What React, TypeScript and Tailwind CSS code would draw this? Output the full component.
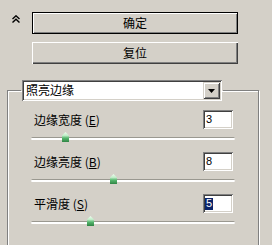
import React from "react";

const sunken =
  "shadow-[inset_1px_1px_0_#808080,inset_-1px_-1px_0_#ffffff,inset_2px_2px_0_#404040,inset_-2px_-2px_0_#d4d0c8]";

function TextBox({ value, selected }: { value: string; selected?: boolean }) {
  return (
    <div
      className={`w-[30px] h-[19px] bg-white ${sunken} flex items-center pl-[2px] text-[11px] leading-none font-['Liberation_Sans',sans-serif]`}
    >
      {selected ? (
        <span className="bg-[#0a246a] text-white px-[1px] h-[12px] flex items-center">{value}</span>
      ) : (
        <span className="pl-[1px]">{value}</span>
      )}
    </div>
  );
}

function Thumb() {
  return (
    <svg width="7" height="10" viewBox="0 0 7 10">
      <defs>
        <linearGradient id="tg" x1="0" y1="0" x2="0" y2="1">
          <stop offset="0" stopColor="#f0fff0" />
          <stop offset="0.35" stopColor="#c0ecc8" />
          <stop offset="0.6" stopColor="#58b870" />
          <stop offset="1" stopColor="#2f8444" />
        </linearGradient>
      </defs>
      <polygon points="3.5,0 7,3.5 7,10 0,10 0,3.5" fill="url(#tg)" />
    </svg>
  );
}

function Slider({ pos }: { pos: number }) {
  return (
    <div className="relative h-[23px] pt-[8px]">
      <div className="h-[3px] rounded-full bg-white border-t border-[#9a9890]" />
      <div className="absolute top-[3px] flex" style={{ left: pos - 3 }}>
        <Thumb />
      </div>
    </div>
  );
}

function Section({
  label,
  keyChar,
  value,
  pos,
  selected,
}: {
  label: string;
  keyChar: string;
  value: string;
  pos: number;
  selected?: boolean;
}) {
  return (
    <div className="w-[204px]">
      <div className="flex items-center justify-between h-[19px] pr-[2px]">
        <span className="ml-[3px] text-[12px] leading-none">
          {label} (<span className="underline">{keyChar}</span>)
        </span>
        <TextBox value={value} selected={selected} />
      </div>
      <Slider pos={pos} />
    </div>
  );
}

export default function App() {
  return (
    <div className="w-[272px] h-[245px] bg-[#d4d0c8] overflow-hidden text-black font-['Noto_Sans_CJK_SC','Noto_Sans',sans-serif]">
      <div className="flex pt-[12px]">
        <div className="w-[32px] pl-[12px] pt-[3px]">
          <svg width="8" height="8" viewBox="0 0 8 8">
            <polyline points="0.5,4 4,0.8 7.5,4" fill="none" stroke="#000" strokeWidth="1.4" />
            <polyline points="0.5,7.5 4,4.3 7.5,7.5" fill="none" stroke="#000" strokeWidth="1.4" />
          </svg>
        </div>
        <div className="w-[206px] flex flex-col gap-[8px]">
          <div className="h-[22px] border border-black bg-[#d4d0c8] shadow-[inset_1px_1px_0_#ffffff,inset_-1px_-1px_0_#808080] flex items-center justify-center text-[12px] leading-none pb-[1px]">
            确定
          </div>
          <div className="h-[22px] bg-[#d4d0c8] shadow-[inset_1px_1px_0_#ffffff,inset_-1px_-1px_0_#404040,inset_-2px_-2px_0_#808080] flex items-center justify-center text-[12px] leading-none pb-[1px]">
            复位
          </div>
        </div>
      </div>
      <fieldset className="mt-[16px] ml-[7px] w-[252px] h-[200px] border border-[#808080] shadow-[inset_1px_1px_0_#ffffff,1px_1px_0_#ffffff]">
        <legend className="ml-[13px] px-[1px]">
          <div className={`w-[200px] h-[21px] bg-white ${sunken} flex items-center`}>
            <span className="flex-1 pl-[4px] text-[12px] leading-none pb-[1px]">照亮边缘</span>
            <div className="w-[17px] h-[17px] mr-[2px] bg-[#d4d0c8] shadow-[inset_1px_1px_0_#d4d0c8,inset_-1px_-1px_0_#404040,inset_2px_2px_0_#ffffff,inset_-2px_-2px_0_#808080] flex items-center justify-center">
              <svg width="7" height="4" viewBox="0 0 7 4">
                <polygon points="0,0 7,0 3.5,4" fill="#000" />
              </svg>
            </div>
          </div>
        </legend>
        <div className="pl-[23px] pt-[9px]">
          <Section label="边缘宽度" keyChar="E" value="3" pos={34} />
          <Section label="边缘亮度" keyChar="B" value="8" pos={82} />
          <Section label="平滑度" keyChar="S" value="5" pos={59} selected />
        </div>
      </fieldset>
    </div>
  );
}
